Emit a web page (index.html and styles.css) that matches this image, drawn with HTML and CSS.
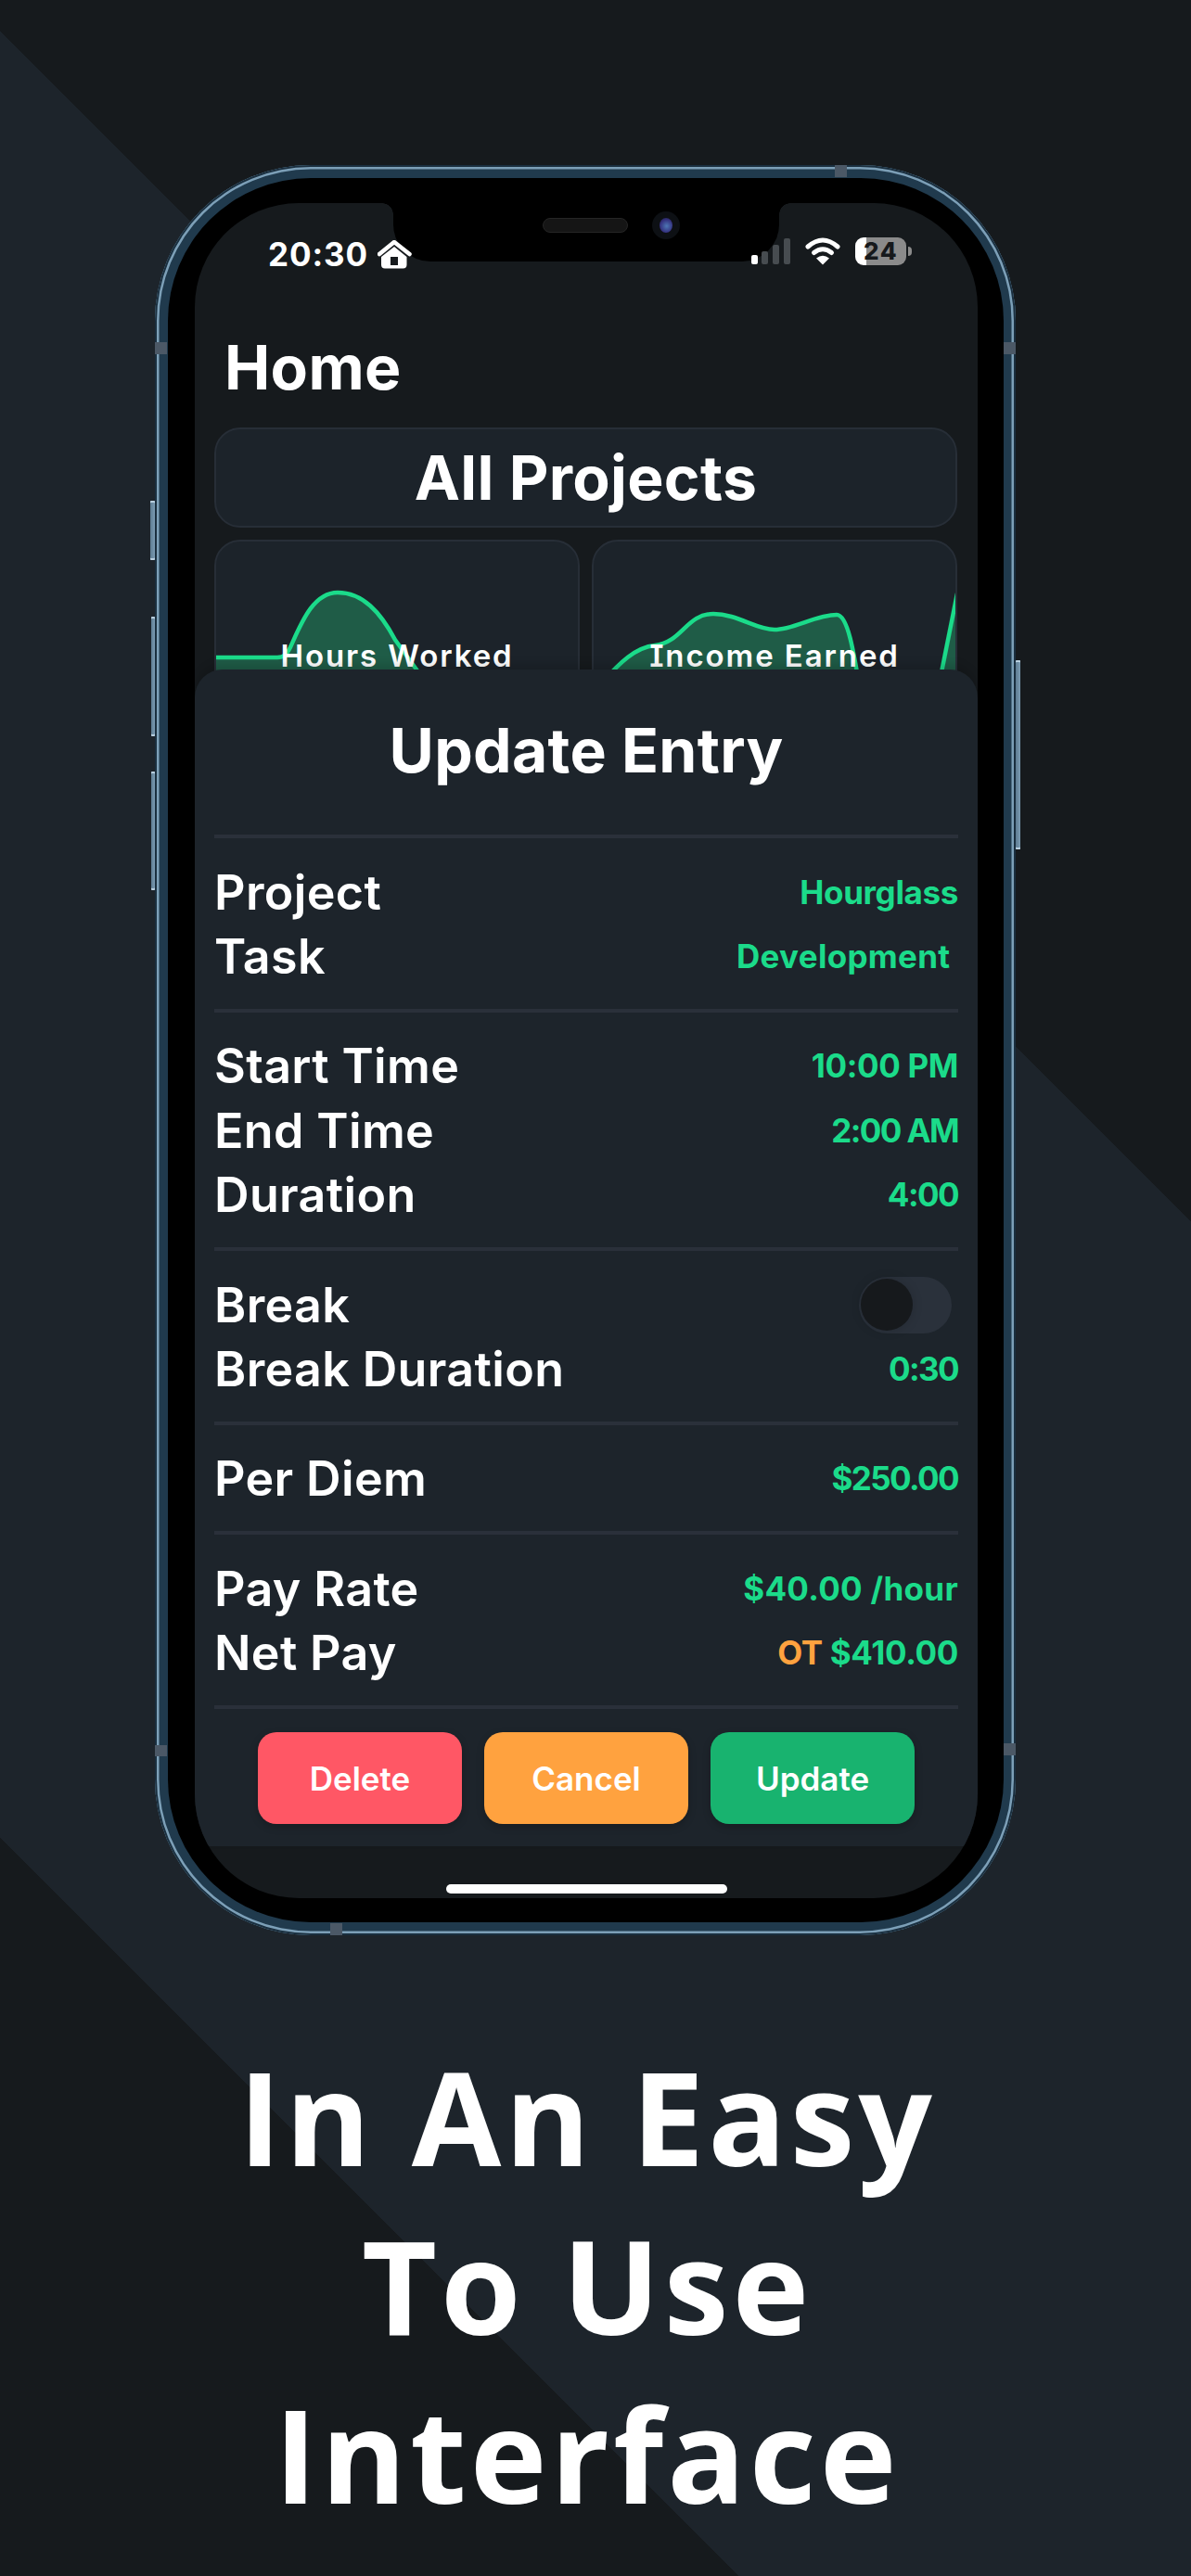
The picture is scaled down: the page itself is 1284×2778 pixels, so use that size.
FILE: index.html
```html
<!DOCTYPE html>
<html lang="en">
<head>
<meta charset="utf-8">
<title>In An Easy To Use Interface</title>
<link rel="stylesheet" href="styles.css">
</head>
<body>
<main class="page">
  <div class="phone">
    <span class="side mute"></span>
    <span class="side vol-up"></span>
    <span class="side vol-down"></span>
    <span class="side power"></span>
    <span class="band band-top"></span>
    <span class="band band-l1"></span>
    <span class="band band-r1"></span>
    <span class="band band-l2"></span>
    <span class="band band-r2"></span>
    <span class="band band-bottom"></span>
    <div class="bezel">
      <div class="screen">
        <div class="notch">
          <span class="speaker"></span>
          <span class="camera"><span class="lens"></span></span>
        </div>
        <header class="status">
          <div class="status-left">
            <span class="time">20:30</span>
            <svg class="ico-home" viewBox="405 259 37 31" width="37" height="31" aria-hidden="true">
              <path d="M407 274 L423 261 L439.500 274" fill="none" stroke="#fff" stroke-width="4.500" stroke-linecap="round" stroke-linejoin="round"/>
              <path fill-rule="evenodd" fill="#fff" d="M423 266 L436.500 277 V285.500 Q436.500 289.500 432.500 289.500 H413 Q409 289.500 409 285.500 V277 Z M419 277 V286 H427 V277 Z"/>
            </svg>
          </div>
          <div class="status-right">
            <svg class="ico-signal" viewBox="811 259 43 28" width="43" height="28" aria-hidden="true">
              <rect x="811" y="277" width="7" height="10" rx="2" fill="#fff"/>
              <rect x="822" y="273" width="7" height="14" rx="2" fill="#474c50"/>
              <rect x="834" y="266" width="7" height="21" rx="2" fill="#474c50"/>
              <rect x="846" y="259" width="7" height="28" rx="2" fill="#474c50"/>
            </svg>
            <svg class="ico-wifi" viewBox="868 258 39 30" width="39" height="30" aria-hidden="true">
              <path d="M871 268 Q887 254 903 268" fill="none" stroke="#fff" stroke-width="5" stroke-linecap="round"/>
              <path d="M877.500 274.500 Q887 267 896.500 274.500" fill="none" stroke="#fff" stroke-width="5" stroke-linecap="round"/>
              <path d="M887 287.500 L880 280.500 Q887 275 894 280.500 Z" fill="#fff"/>
            </svg>
            <div class="battery"><span class="battery-level">24</span><span class="battery-nub"></span></div>
          </div>
        </header>
        <h1 class="home-title">Home</h1>
        <section class="dashboard">
          <div class="card project-card">All Projects</div>
          <div class="chart-grid">
            <div class="card chart-card">
              <svg class="chart" viewBox="231 582 394 200" width="394" height="200" aria-hidden="true">
                <path class="area" d="M231 709 H299 C306 709 309 706 313 698 C324 674 337 639 364 639 C391 639 410 660 426 690 L449 722 L462 742 V780 H231 Z"/>
                <path class="line" d="M231 709 H299 C306 709 309 706 313 698 C324 674 337 639 364 639 C391 639 410 660 426 690 L449 722 L462 742"/>
              </svg>
              <span class="chart-title">Hours Worked</span>
            </div>
            <div class="card chart-card">
              <svg class="chart" viewBox="638 582 394 200" width="394" height="200" aria-hidden="true">
                <path class="area" d="M650 735 C668 715 685 698 706 696 C735 693 740 662 769 662 C795 662 815 679 835 679 C855 679 880 663 902 663 C914 663 920 700 930 760 V780 H650 Z"/>
                <path class="line" d="M650 735 C668 715 685 698 706 696 C735 693 740 662 769 662 C795 662 815 679 835 679 C855 679 880 663 902 663 C914 663 920 700 930 760"/>
                <path class="area" d="M1008 760 L1032 640 V780 H1008 Z"/>
                <path class="line" d="M1008 760 L1032 640"/>
              </svg>
              <span class="chart-title">Income Earned</span>
            </div>
          </div>
        </section>

        <section class="sheet">
          <h2 class="sheet-title">Update Entry</h2>
          <div class="group">
            <div class="row"><span class="label">Project</span><span class="value">Hourglass</span></div>
            <div class="row"><span class="label">Task</span><span class="value wide">Development </span></div>
          </div>
          <div class="group">
            <div class="row"><span class="label">Start Time</span><span class="value">10:00 PM</span></div>
            <div class="row"><span class="label">End Time</span><span class="value tight">2:00 AM</span></div>
            <div class="row"><span class="label">Duration</span><span class="value tight">4:00</span></div>
          </div>
          <div class="group">
            <div class="row"><span class="label">Break</span><span class="toggle"><span class="knob"></span></span></div>
            <div class="row"><span class="label">Break Duration</span><span class="value tight">0:30</span></div>
          </div>
          <div class="group">
            <div class="row"><span class="label">Per Diem</span><span class="value tight">$250.00</span></div>
          </div>
          <div class="group">
            <div class="row"><span class="label">Pay Rate</span><span class="value wide">$40.00 /hour</span></div>
            <div class="row"><span class="label">Net Pay</span><span class="value"><span class="ot">OT</span> $410.00</span></div>
          </div>
          <div class="actions">
            <button class="btn btn-delete" type="button">Delete</button>
            <button class="btn btn-cancel" type="button">Cancel</button>
            <button class="btn btn-update" type="button">Update</button>
          </div>
        </section>
        <span class="home-indicator"></span>
      </div>
    </div>
  </div>
  <h2 class="headline">In An Easy<br>To Use<br>Interface</h2>
</main>
</body>
</html>
```
FILE: styles.css
```css
* { box-sizing: border-box; }
html, body { margin: 0; padding: 0; }
body {
  width: 1284px;
  height: 2778px;
  overflow: hidden;
  font-family: "Inter", "Liberation Sans", sans-serif;
  color: #fff;
  background: linear-gradient(45deg, #161a1d 0 563px, #1d242b 563px 1941px, #161a1d 1941px);
}
.page {
  display: flex;
  flex-direction: column;
  align-items: flex-start;
  padding-top: 178px;
}

/* phone */
.phone {
  position: relative;
  width: 928px;
  height: 1909px;
  margin-left: 167px;
  padding: 14px 13px 14px 14px;
  border-radius: 168px;
  background: #203a4d;
  box-shadow: inset 0 0 0 2px #1a2f3f, inset 0 0 0 4.500px #7c9fb7;
}
.bezel {
  height: 100%;
  padding: 27px 28px 26px 29px;
  border-radius: 154px;
  background: #000;
}
.screen {
  position: relative;
  height: 100%;
  overflow: hidden;
  border-radius: 112px;
  background: #161a1d;
}
.side {
  position: absolute;
  border-radius: 1px;
  background: linear-gradient(90deg, #5d7c92, #7b9bb2);
  box-shadow: inset 0 2px 0 #b8cfdf, inset 0 -2px 0 #b8cfdf;
}
.mute { left: -5px; top: 362px; width: 5px; height: 64px; }
.vol-up { left: -4px; top: 487px; width: 4px; height: 129px; }
.vol-down { left: -4px; top: 654px; width: 4px; height: 128px; }
.power { right: -5px; top: 534px; width: 5px; height: 204px; }
.band { position: absolute; background: #4b5866; }
.band-top { left: 733px; top: 0; width: 13px; height: 13px; }
.band-l1 { left: 0; top: 191px; width: 13px; height: 13px; }
.band-r1 { right: 0; top: 191px; width: 13px; height: 13px; }
.band-l2 { left: 0; top: 1704px; width: 13px; height: 12px; }
.band-r2 { right: 0; top: 1702px; width: 13px; height: 13px; }
.band-bottom { left: 189px; bottom: 0; width: 13px; height: 13px; }

/* notch */
.notch {
  position: absolute;
  left: 214px;
  top: 0;
  z-index: 3;
  display: flex;
  justify-content: center;
  align-items: flex-start;
  gap: 26px;
  width: 416px;
  height: 63px;
  padding: 9px 0 0 54px;
  border-radius: 0 0 40px 40px;
  background: #000;
}
.notch::before, .notch::after {
  content: "";
  position: absolute;
  top: 0;
  width: 12px;
  height: 12px;
}
.notch::before { left: -12px; background: radial-gradient(circle at 0 100%, transparent 11.500px, #000 12px); }
.notch::after { right: -12px; background: radial-gradient(circle at 100% 100%, transparent 11.500px, #000 12px); }
.speaker {
  width: 92px;
  height: 16px;
  margin-top: 7px;
  border-radius: 8px;
  border: 1px solid #252525;
  background: #151515;
}
.camera {
  display: flex;
  align-items: center;
  justify-content: center;
  width: 30px;
  height: 30px;
  border-radius: 50%;
  background: #0d1014;
}
.lens {
  width: 14px;
  height: 16px;
  border-radius: 50%;
  background: radial-gradient(circle at 55% 55%, #4d77b5 0, #34307e 60%, #141a33 100%);
}

/* status bar */
.status {
  position: relative;
  z-index: 4;
  display: flex;
  justify-content: space-between;
  align-items: flex-start;
  height: 138px;
  padding: 35px 71px 0 79px;
}
.status-left { display: flex; align-items: center; gap: 10px; height: 40px; }
.time { font-size: 35px; line-height: 40px; font-weight: 700; letter-spacing: 0.900px; }
.status-right { display: flex; align-items: center; gap: 15px; height: 40px; margin-top: -3px; }
.ico-home, .ico-signal, .ico-wifi { display: block; flex: none; }
.battery {
  position: relative;
  width: 55px;
  height: 30px;
  margin-right: 6px;
}
.battery-level {
  display: block;
  height: 30px;
  border-radius: 9px;
  background: linear-gradient(90deg, #fff 0 12px, #8b8b8b 12px);
  color: #16191c;
  font-size: 26px;
  line-height: 30px;
  font-weight: 800;
  letter-spacing: 1.500px;
  text-align: center;
}
.battery-nub {
  position: absolute;
  left: 57px;
  top: 10px;
  width: 4px;
  height: 10px;
  border-radius: 0 4px 4px 0;
  background: #8b8b8b;
}

/* home */
.home-title {
  margin: 0 0 26px;
  padding-left: 32px;
  font-size: 66px;
  line-height: 78px;
  font-weight: 700;
  letter-spacing: 0.300px;
}
.dashboard { display: flex; flex-direction: column; gap: 13px; padding: 0 22px 0 21px; }
.card {
  border: 2px solid #272e37;
  border-radius: 28px;
  background: #1c232a;
}
.project-card {
  height: 108px;
  font-size: 66px;
  line-height: 104px;
  font-weight: 700;
  letter-spacing: 0.300px;
  text-align: center;
}
.chart-grid { display: grid; grid-template-columns: 394px 394px; gap: 13px; }
.chart-card { position: relative; height: 200px; overflow: hidden; }
.chart { display: block; margin: -2px; }
.area { fill: #1f5c47; }
.line { fill: none; stroke: #1bdb8a; stroke-width: 4.500; stroke-linejoin: round; }
.chart-title {
  position: absolute;
  left: 0;
  right: 0;
  top: 103px;
  font-size: 33px;
  line-height: 40px;
  font-weight: 600;
  letter-spacing: 1.900px;
  text-align: center;
  font-feature-settings: "cv08", "ss02";
}

/* sheet */
.sheet {
  position: absolute;
  left: 0;
  right: 0;
  top: 503px;
  bottom: 56px;
  z-index: 2;
  padding: 0 21px;
  border-radius: 30px 30px 0 0;
  background: #1d242b;
  box-shadow: 0 -6px 10px rgba(0, 0, 0, 0.14);
}
.sheet-title {
  height: 182px;
  margin: 0;
  padding-top: 48px;
  border-bottom: 4px solid #2a303a;
  font-size: 66px;
  line-height: 78px;
  font-weight: 700;
  letter-spacing: 0.300px;
  text-align: center;
}
.group {
  padding: 23.500px 0 21.700px;
  border-bottom: 4px solid #2a303a;
}
.row {
  display: flex;
  justify-content: space-between;
  align-items: center;
  height: 69.300px;
}
.label { font-size: 52px; font-weight: 600; line-height: 69px; letter-spacing: 0.350px; }
.value {
  font-size: 35px;
  font-weight: 700;
  line-height: 69px;
  letter-spacing: -0.350px;
  color: #1bdb8a;
  white-space: pre;
}
.value.tight { letter-spacing: -1.600px; }
.value.wide { letter-spacing: 0.300px; }
.ot { color: #ffa23f; }
.toggle {
  display: flex;
  align-items: center;
  width: 100px;
  height: 61px;
  margin-right: 7px;
  padding-left: 2px;
  border-radius: 31px;
  background: #2a313b;
}
.knob {
  width: 56px;
  height: 56px;
  border-radius: 50%;
  background: #16191c;
  box-shadow: 0 0 12px rgba(0, 0, 0, 0.16);
}
.actions { display: flex; justify-content: center; gap: 24px; padding-top: 25px; }
.btn {
  width: 220px;
  height: 99px;
  padding: 2px 0 0;
  border: 0;
  border-radius: 20px;
  color: #fff;
  font-family: inherit;
  font-size: 35px;
  font-weight: 600;
  box-shadow: 0 3px 8px rgba(0, 0, 0, 0.22);
}
.btn-delete { background: #ff5765; }
.btn-cancel { background: #ffa23f; }
.btn-update { background: #18b36f; }
.home-indicator {
  position: absolute;
  left: 271px;
  bottom: 5px;
  width: 303px;
  height: 10px;
  border-radius: 5px;
  background: #fff;
}

/* headline */
.headline {
  width: 1266px;
  margin: 104px 0 0;
  font-family: "Open Sans", "Liberation Sans", sans-serif;
  font-size: 140px;
  line-height: 182px;
  font-weight: 700;
  letter-spacing: 4px;
  text-align: center;
}
```
